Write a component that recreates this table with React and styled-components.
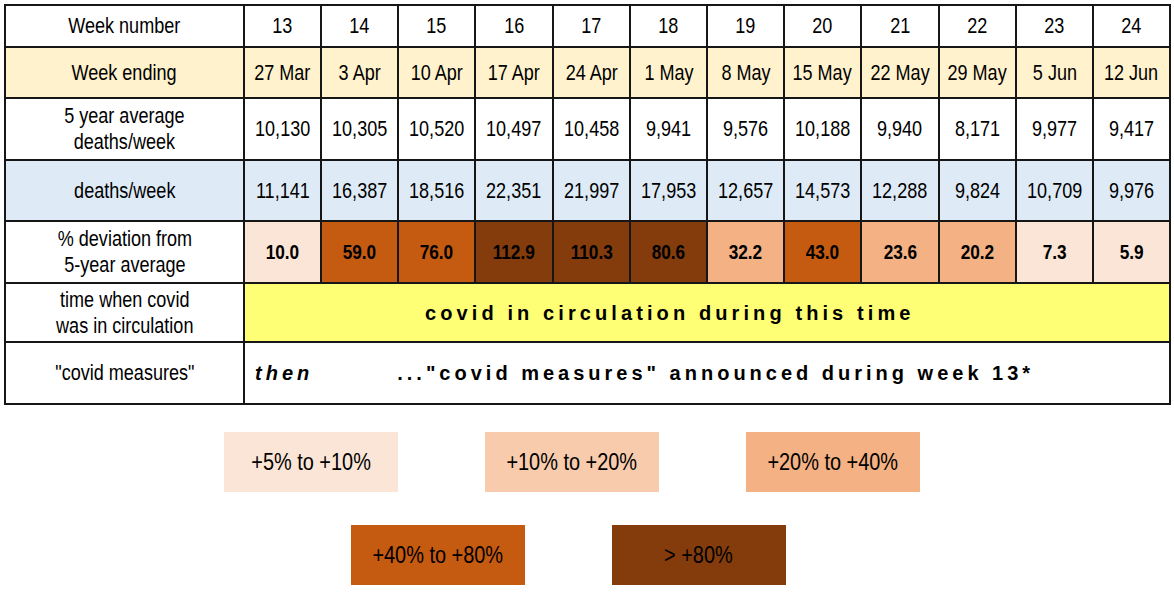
import React from 'react';
import styled, { createGlobalStyle } from 'styled-components';

const Global = createGlobalStyle`
  html, body { margin: 0; padding: 0; background: #ffffff; }
  body {
    font-family: "Liberation Sans", Arial, sans-serif;
    color: #000;
  }
`;

const Page = styled.div`
  width: 1174px;
  height: 592px;
  padding: 4px 0 0 4px;
  box-sizing: border-box;
  overflow: hidden;
`;

const Table = styled.table`
  border-collapse: collapse;
  table-layout: fixed;
  width: 1166px;
`;

const Row = styled.tr`
  height: ${p => p.$h}px;
`;

const Cell = styled.td`
  border: 2px solid #161616;
  background: ${p => p.$bg || '#ffffff'};
  text-align: center;
  vertical-align: middle;
  font-size: ${p => (p.$bold ? 21 : 22)}px;
  line-height: 26px;
  padding: 0;
  font-weight: ${p => (p.$bold ? 700 : 400)};
  white-space: nowrap;
`;

/* Arial Narrow look: regular glyphs squeezed horizontally */
const Narrow = styled.span`
  display: inline-block;
  transform: scaleX(${p => p.$sx || 0.82});
  transform-origin: center;
`;

const SpacedCell = styled(Cell)`
  font-weight: 700;
  font-size: 20px;
  letter-spacing: ${p => p.$ls}px;
  text-align: left;
  padding-left: ${p => p.$pl || 0}px;
`;

const Then = styled.span`
  font-style: italic;
`;

const Measures = styled.span`
  margin-left: 84px;
`;

const Legend = styled.div`
  width: 1136px;
  display: flex;
  flex-direction: column;
  align-items: center;
  gap: 33px;
  margin-top: 27px;
`;

const LegendRow = styled.div`
  display: flex;
  gap: 87px;
  margin-right: ${p => p.$shift || 0}px;
`;

const Swatch = styled.div`
  width: 174px;
  height: 60px;
  background: ${p => p.$bg};
  display: flex;
  align-items: center;
  justify-content: center;
  font-size: 24px;
`;

const C = {
  l80: '#FBE5D6',
  l60: '#F8CBAD',
  l40: '#F4B183',
  d25: '#C55A11',
  d50: '#843C0C',
  cream: '#FFF2CC',
  blue: '#DEEBF7',
  yellow: '#FFFF75',
};

const weeks = [13, 14, 15, 16, 17, 18, 19, 20, 21, 22, 23, 24];
const endings = ['27 Mar', '3 Apr', '10 Apr', '17 Apr', '24 Apr', '1 May', '8 May', '15 May', '22 May', '29 May', '5 Jun', '12 Jun'];
const avg = ['10,130', '10,305', '10,520', '10,497', '10,458', '9,941', '9,576', '10,188', '9,940', '8,171', '9,977', '9,417'];
const deaths = ['11,141', '16,387', '18,516', '22,351', '21,997', '17,953', '12,657', '14,573', '12,288', '9,824', '10,709', '9,976'];
const dev = [
  ['10.0', C.l80], ['59.0', C.d25], ['76.0', C.d25], ['112.9', C.d50], ['110.3', C.d50], ['80.6', C.d50],
  ['32.2', C.l40], ['43.0', C.d25], ['23.6', C.l40], ['20.2', C.l40], ['7.3', C.l80], ['5.9', C.l80],
];
const colWidths = [239, 77, 77, 77, 78, 77, 77, 77, 77, 78, 77, 77, 77];

const legend = [
  { shift: 0, items: [['+5% to +10%', C.l80], ['+10% to +20%', C.l60], ['+20% to +40%', C.l40]] },
  { shift: 8, items: [['+40% to +80%', C.d25], ['> +80%', C.d50]] },
];

export default function App() {
  return (
    <Page>
      <Global />
      <Table>
        <colgroup>
          {colWidths.map((w, i) => <col key={i} style={{ width: w }} />)}
        </colgroup>
        <tbody>
          <Row $h={42}>
            <Cell><Narrow>Week number</Narrow></Cell>
            {weeks.map(w => <Cell key={w}><Narrow>{w}</Narrow></Cell>)}
          </Row>
          <Row $h={51}>
            <Cell $bg={C.cream}><Narrow>Week ending</Narrow></Cell>
            {endings.map(e => <Cell key={e} $bg={C.cream}><Narrow>{e}</Narrow></Cell>)}
          </Row>
          <Row $h={62}>
            <Cell><Narrow>5 year average<br />deaths/week</Narrow></Cell>
            {avg.map((v, i) => <Cell key={i}><Narrow>{v}</Narrow></Cell>)}
          </Row>
          <Row $h={61}>
            <Cell $bg={C.blue}><Narrow>deaths/week</Narrow></Cell>
            {deaths.map((v, i) => <Cell key={i} $bg={C.blue}><Narrow>{v}</Narrow></Cell>)}
          </Row>
          <Row $h={62}>
            <Cell><Narrow>% deviation from<br />5-year average</Narrow></Cell>
            {dev.map(([v, bg], i) => <Cell key={i} $bg={bg} $bold><Narrow>{v}</Narrow></Cell>)}
          </Row>
          <Row $h={59}>
            <Cell><Narrow>time when covid<br />was in circulation</Narrow></Cell>
            <SpacedCell colSpan={12} $bg={C.yellow} $ls={4.1} $pl={180}>covid in circulation during this time</SpacedCell>
          </Row>
          <Row $h={62}>
            <Cell><Narrow>"covid measures"</Narrow></Cell>
            <SpacedCell colSpan={12} $ls={4.0} $pl={10}>
              <Then>then</Then>
              <Measures>..."covid measures" announced during week 13*</Measures>
            </SpacedCell>
          </Row>
        </tbody>
      </Table>
      <Legend>
        {legend.map((row, ri) => (
          <LegendRow key={ri} $shift={row.shift}>
            {row.items.map(([label, bg]) => (
              <Swatch key={label} $bg={bg}><Narrow $sx={0.83}>{label}</Narrow></Swatch>
            ))}
          </LegendRow>
        ))}
      </Legend>
    </Page>
  );
}
